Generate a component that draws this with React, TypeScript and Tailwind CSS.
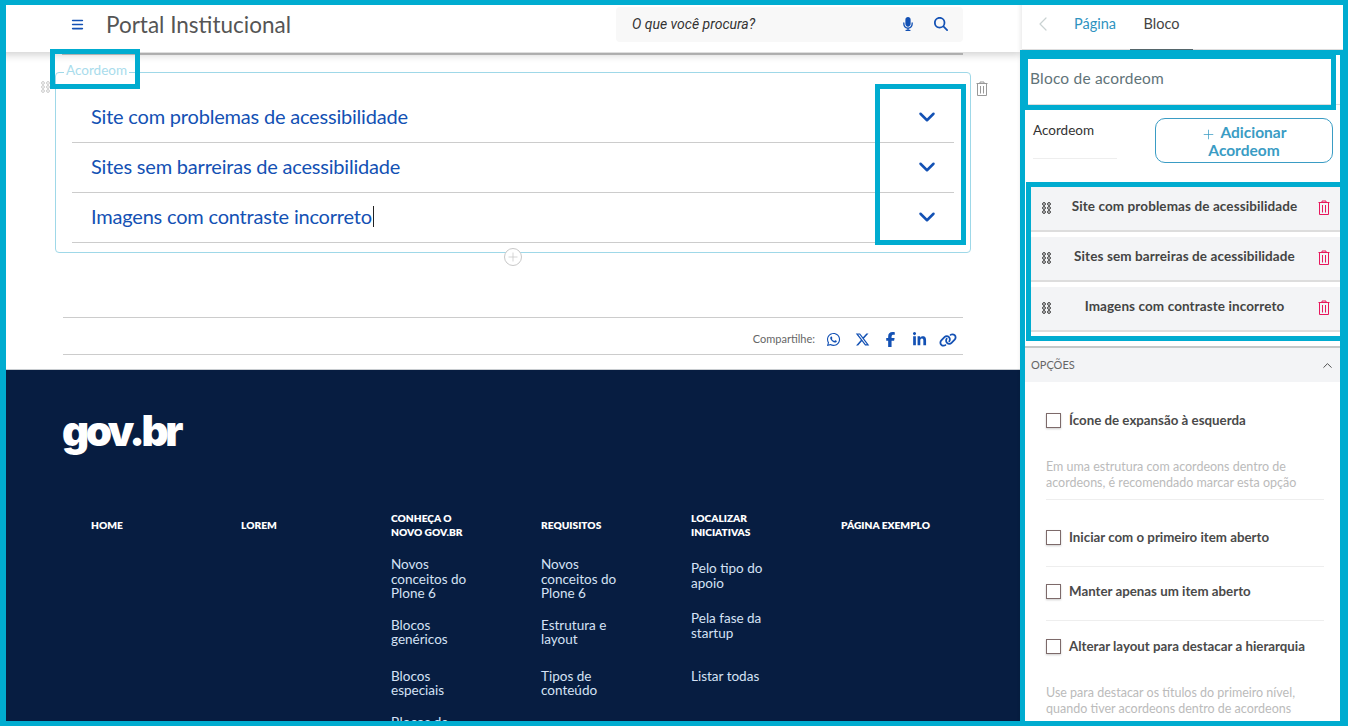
import React from "react";
import { FaWhatsapp, FaXTwitter, FaFacebookF, FaLinkedinIn, FaLink, FaMicrophone, FaMagnifyingGlass, FaBars } from "react-icons/fa6";
import { ChevronDown, ChevronUp, ChevronLeft, Plus } from "lucide-react";

const sans = "font-['Lato','Noto_Sans',sans-serif]";

function Grip({ className = "" }: { className?: string }) {
  const pts = [2, 6, 10];
  return (
    <svg width="9" height="12" viewBox="0 0 9 12" className={className} fill="none" stroke="currentColor" strokeWidth="1">
      {pts.map((y) => (
        <g key={y}>
          <circle cx="2" cy={y} r="1.4" />
          <circle cx="7" cy={y} r="1.4" />
        </g>
      ))}
    </svg>
  );
}

function Trash({ className = "" }: { className?: string }) {
  return (
    <svg width="12" height="15" viewBox="0 0 12 15" className={className} fill="none" stroke="currentColor" strokeWidth="1">
      <path d="M0.5 2.5H11.5M4 2.5V1H8V2.5M1.5 2.5V14.5H10.5V2.5M4.5 5V12.5M7.5 5V12.5" />
    </svg>
  );
}

function AccordionRow({ text, caret }: { text: string; caret?: boolean }) {
  return (
    <div className="flex h-[50px] items-center justify-between border-b border-[#cccccc] pl-[19px] pr-[14px]">
      <span className="pb-[4px] text-[20px] tracking-[-0.2px] text-[#1351b4]">
        {text}
        {caret && <span className="ml-px inline-block h-[21px] w-px translate-y-[3px] bg-[#222]" />}
      </span>
      <ChevronDown size={26} strokeWidth={2.3} className="mb-[1px] text-[#1351b4]" />
    </div>
  );
}

type FooterLink = { lines: string[]; className: string };

function FooterColumn({ title, links }: { title: string[]; links: FooterLink[] }) {
  return (
    <div className="w-[150px] pr-[50px]">
      <div className="flex min-h-[28px] flex-col justify-center text-[10.2px] font-extrabold uppercase leading-[14px] text-white">
        {title.map((t) => (
          <div key={t}>{t}</div>
        ))}
      </div>
      <div className="flex flex-col">
        {links.map((l) => (
          <div key={l.lines.join()} className={`text-[13.5px] leading-[14.5px] text-[#d5e2f5] ${l.className}`}>
            {l.lines.map((t) => (
              <div key={t}>{t}</div>
            ))}
          </div>
        ))}
      </div>
    </div>
  );
}

function SideItem({ text }: { text: string }) {
  return (
    <div className="mb-[5px] flex h-[45px] items-center border-b-2 border-[#dddddd] bg-[#f3f4f6] pl-[11px] pr-[10px]">
      <Grip className="mb-[2px] text-[#333]" />
      <span className="flex-1 pb-[5px] text-center text-[13.5px] font-bold tracking-[0.1px] text-[#444]">{text}</span>
      <Trash className="mb-[2px] text-[#e8175d]" />
    </div>
  );
}

function Check({ label, className = "" }: { label: string; className?: string }) {
  return (
    <div className={`flex items-center ${className}`}>
      <span className="h-[15px] w-[15px] border border-[#7d6a6a] bg-white shadow-[0_1px_2px_rgba(0,0,0,0.2)]" />
      <span className="ml-2 text-[13.3px] font-bold text-[#4a4a4a]">{label}</span>
    </div>
  );
}

const frame = "pointer-events-none absolute border-[#00acd0]";

export default function App() {
  return (
    <div className={`relative flex h-[726px] w-[1348px] overflow-hidden bg-white ${sans}`}>
      <main className="flex w-[1022px] flex-col">
        <header className="z-10 flex h-[52px] shrink-0 items-center bg-white pb-[4px] pl-[71px] shadow-[0_3px_8px_rgba(0,0,0,0.18)]">
          <FaBars size={13} className="text-[#1351b4]" />
          <span className="ml-[22px] w-[185px] whitespace-nowrap pt-[2px] text-[22.5px] text-[#555]">Portal Institucional</span>
          <div className="ml-[325px] flex h-[35px] w-[347px] items-center rounded bg-[#f8f8f8] pl-4 pr-[15px] font-['Roboto',sans-serif] text-[14px] italic text-[#333]">
            <span className="flex-1">O que você procura?</span>
            <FaMicrophone size={14} className="mr-[19px] text-[#1351b4]" />
            <FaMagnifyingGlass size={14} className="text-[#1351b4]" />
          </div>
        </header>
        <div className="mx-[62px] mt-px h-[2px] w-[901px] shrink-0 bg-[#c4c4c4]" />

        <section className="relative ml-[55px] mt-[17px] h-[181px] w-[916px] shrink-0 rounded-sm border border-[#9fd8e8] px-4 pt-[20px]">
          <span className="absolute -top-[11px] left-[8px] bg-white px-[2px] text-[13.5px] leading-[16px] text-[#a9dcec]">
            Acordeom
          </span>
          <Grip className="absolute -left-[15px] top-[8px] text-[#c8c8c8]" />
          <Trash className="absolute -right-[18px] top-[8px] text-[#999]" />
          <AccordionRow text="Site com problemas de acessibilidade" />
          <AccordionRow text="Sites sem barreiras de acessibilidade" />
          <AccordionRow text="Imagens com contraste incorreto" caret />
          <span className="absolute -bottom-[14px] left-[448px] flex h-[18px] w-[18px] items-center justify-center rounded-full border border-[#c8c8c8] bg-white text-[#c8c8c8]">
            <Plus size={14} strokeWidth={1.3} />
          </span>
        </section>

        <div className="mx-[63px] mt-[64px] flex h-[38px] w-[900px] shrink-0 items-center justify-end border-y border-[#cccccc] pr-[6px] pt-[7px]">
          <span className="mr-[11px] text-[11px] text-[#666]">Compartilhe:</span>
          <FaWhatsapp size={15} className="mr-[14px] text-[#1351b4]" />
          <FaXTwitter size={15} className="mr-[13px] text-[#1351b4]" />
          <FaFacebookF size={15} className="mr-[14px] text-[#1351b4]" />
          <FaLinkedinIn size={15} className="mr-[12px] text-[#1351b4]" />
          <FaLink size={18} className="text-[#1351b4]" />
        </div>

        <footer className="mt-[14px] flex-1 border-t border-[#c8ccd0] bg-[#071d41] pl-[62px]">
          <div className="mt-[34px] h-[59px] font-['Inter',sans-serif] text-[42px] font-black leading-[54px] tracking-[-3.5px] text-white">gov.br</div>
          <div className="ml-[29px] mt-[48px] flex">
            <FooterColumn title={["Home"]} links={[]} />
            <FooterColumn title={["Lorem"]} links={[]} />
            <FooterColumn
              title={["Conheça o", "novo gov.br"]}
              links={[
                { lines: ["Novos", "conceitos do", "Plone 6"], className: "mt-[18px]" },
                { lines: ["Blocos", "genéricos"], className: "mt-[17px]" },
                { lines: ["Blocos", "especiais"], className: "mt-[22px]" },
                { lines: ["Blocos de", "layout"], className: "mt-[17px]" },
              ]}
            />
            <FooterColumn
              title={["Requisitos"]}
              links={[
                { lines: ["Novos", "conceitos do", "Plone 6"], className: "mt-[18px]" },
                { lines: ["Estrutura e", "layout"], className: "mt-[17px]" },
                { lines: ["Tipos de", "conteúdo"], className: "mt-[22px]" },
              ]}
            />
            <FooterColumn
              title={["Localizar", "iniciativas"]}
              links={[
                { lines: ["Pelo tipo do", "apoio"], className: "mt-[22px]" },
                { lines: ["Pela fase da", "startup"], className: "mt-[21px]" },
                { lines: ["Listar todas"], className: "mt-[29px]" },
              ]}
            />
            <FooterColumn title={["Página exemplo"]} links={[]} />
          </div>
        </footer>
      </main>

      <aside className="z-20 flex w-[326px] flex-col bg-white shadow-[-2px_0_4px_rgba(0,0,0,0.08)]">
        <nav className="flex h-[50px] shrink-0 items-center border-b border-[#dddddd] pl-[9px]">
          <ChevronLeft size={24} strokeWidth={1.2} className="mb-[2px] text-[#c9d2d2]" />
          <span className="ml-[19px] pb-[2px] text-[14.5px] text-[#2f93c0]">Página</span>
          <span className="relative ml-[14px] flex h-[50px] w-[63px] items-center justify-center pb-[2px] text-[14.5px] text-[#444]">
            Bloco
            <span className="absolute bottom-[-1px] left-0 h-[2px] w-full bg-[#55666b]" />
          </span>
        </nav>
        <div className="flex h-[55px] shrink-0 items-center border-b border-[#dddddd] pl-2 pt-[3px] text-[15.5px] tracking-[0.2px] text-[#5f7378]">
          Bloco de acordeom
        </div>
        <div className="flex h-[77px] shrink-0 pl-[11px] pt-[13px]">
          <div className="mt-[4px] h-[37px] w-[84px] border-b border-[#eeeeee] text-[13.5px] leading-[16px] text-[#333]">Acordeom</div>
          <button className="ml-[38px] h-[45px] w-[178px] rounded-[10px] border border-[#3a9cc4] pt-px text-[15.5px] font-bold leading-[16px] text-[#3a9cc4]">
            <span className="mr-1 font-light">
              <Plus size={15} strokeWidth={1.2} className="inline" />
            </span>
            Adicionar
            <br />
            Acordeom
          </button>
        </div>
        <div className="ml-[9px] mr-[8px] mt-0 h-[149px] shrink-0 pt-[5px]">
          <SideItem text="Site com problemas de acessibilidade" />
          <SideItem text="Sites sem barreiras de acessibilidade" />
          <SideItem text="Imagens com contraste incorreto" />
        </div>
        <div className="ml-[3px] mr-[8px] mt-[15px] flex h-[36px] shrink-0 items-center justify-between border-t-2 border-[#c4c8c8] bg-[#f3f4f6] pl-[6px] pr-[5px]">
          <span className="text-[11px] text-[#666]">OPÇÕES</span>
          <ChevronUp size={15} strokeWidth={1.5} className="text-[#444]" />
        </div>
        <div className="ml-[24px] mr-[24px] pt-[29px]">
          <Check label="Ícone de expansão à esquerda" />
          <p className="mt-[28px] whitespace-nowrap border-b border-[#eeeeee] pb-[8px] text-[12.5px] leading-[16px] text-[#bbbbbb]">
            Em uma estrutura com acordeons dentro de
            <br />
            acordeons, é recomendado marcar esta opção
          </p>
          <Check label="Iniciar com o primeiro item aberto" className="mt-[28px]" />
          <div className="mt-[18px] border-t border-[#eeeeee]" />
          <Check label="Manter apenas um item aberto" className="mt-[15px]" />
          <div className="mt-[18px] border-t border-[#eeeeee]" />
          <Check label="Alterar layout para destacar a hierarquia" className="mt-[16px]" />
          <p className="mt-[28px] whitespace-nowrap text-[12.5px] leading-[16px] text-[#bbbbbb]">
            Use para destacar os títulos do primeiro nível,
            <br />
            quando tiver acordeons dentro de acordeons
          </p>
        </div>
      </aside>

      {/* annotation frames drawn over the screenshot */}
      <div className={`${frame} inset-0 z-30 border-y-[5px] border-l-[6px] border-r-[5px]`} />
      <div className={`${frame} left-[1020px] top-[50px] z-30 h-[676px] w-[325px] border-[5px]`} />
      <div className={`${frame} left-[1023px] top-[54px] z-30 h-[56px] w-[313px] border-[5px]`} />
      <div className={`${frame} left-[1026px] top-[182px] z-30 h-[159px] w-[319px] border-[5px]`} />
      <div className={`${frame} left-[50px] top-[49px] z-30 h-[40px] w-[90px] border-[5px]`} />
      <div className={`${frame} left-[875px] top-[84px] z-30 h-[161px] w-[91px] border-[5px]`} />
    </div>
  );
}
